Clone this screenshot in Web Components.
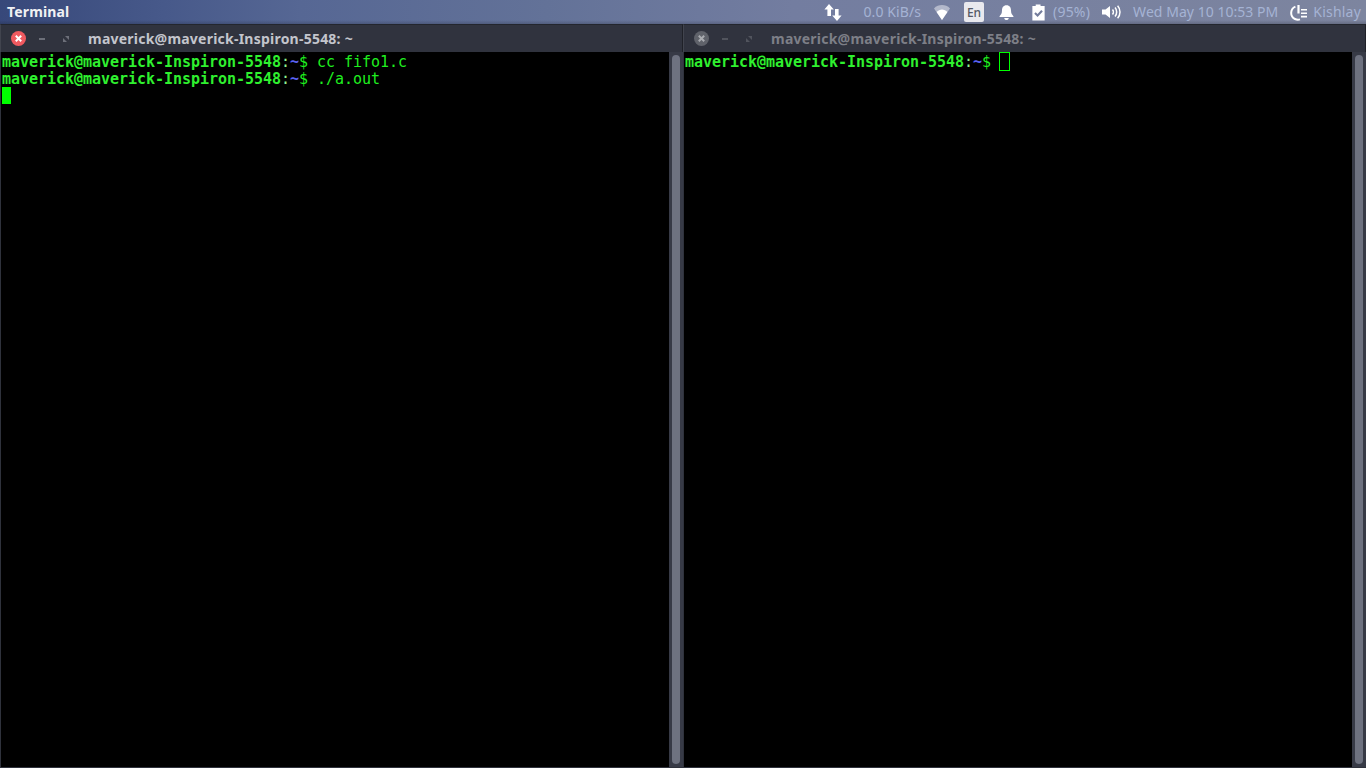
<!DOCTYPE html>
<html>
<head>
<meta charset="utf-8">
<title>Terminal</title>
<style>
html, body { margin: 0; height: 100%; background: #000; overflow: hidden; }
body { display: flex; flex-direction: column; width: 1366px; height: 768px; }
</style>
</head>
<body>
<top-panel title-text="Terminal">
    <tray-icon w="18" style="margin-right:21px">
        <svg width="18" height="17" viewBox="0 0 18 17" fill="#fff"><path d="M5 0 L9.8 5.6 H7 V12 H3.4 V5.6 H.4Z"/><path d="M11 5 H14.6 V11.4 H17.6 L13 17 L8.2 11.4 H11Z"/></svg>
    </tray-icon>
    <tray-text style="margin-right:13px;letter-spacing:.1px">0.0 KiB/s</tray-text>
    <tray-icon w="16" style="margin-right:14px">
        <svg width="16" height="15" viewBox="0 0 16 15"><path d="M0 3.4 C4.4 -1 11.6 -1 16 3.4 L8 15Z" fill="#fff" opacity=".45"/><path d="M2.6 7 C5.6 3.6 10.4 3.6 13.4 7 L8 15Z" fill="#fff"/></svg>
    </tray-icon>
    <lang-badge style="margin-right:15px">En</lang-badge>
    <tray-icon w="15" style="margin-right:18px">
        <svg width="16" height="17" viewBox="0 0 16 17" fill="#fff"><path d="M8 .8 C11.4 .8 12.8 3.4 12.8 6.4 C12.8 9.6 14 11 15.4 12.4 V13.4 H.6 V12.4 C2 11 3.2 9.6 3.2 6.4 C3.2 3.4 4.6 .8 8 .8Z"/><path d="M5.6 14.4 H10.4 C10.2 15.8 9.2 16.6 8 16.6 C6.8 16.6 5.8 15.8 5.6 14.4Z"/></svg>
    </tray-icon>
    <tray-icon w="13" style="margin-right:8px">
        <svg width="13" height="17" viewBox="0 0 14 17"><path d="M4.4 0 H9.6 V1.6 H14 V17 H.8 V1.6 H4.4Z" fill="#fff" transform="translate(-.4 0)"/><path d="M3.2 9 L6 11.8 L10.8 6.6" fill="none" stroke="#737c9c" stroke-width="2.2"/></svg>
    </tray-icon>
    <tray-text style="margin-right:12px">(95%)</tray-text>
    <tray-icon w="20" style="margin-right:11px">
        <svg width="20" height="14" viewBox="0 0 20 14"><path d="M0 4.5 H3.5 L8 1 V13 L3.5 9.5 H0Z" fill="#fff"/><path d="M10.5 4.5 C11.7 5.8 11.7 8.2 10.5 9.5 M13 2.6 C15.2 5 15.2 9 13 11.4 M15.6 .8 C18.8 4.4 18.8 9.6 15.6 13.2" fill="none" stroke="#fff" stroke-width="1.5"/></svg>
    </tray-icon>
    <tray-text style="margin-right:12px;letter-spacing:.04px">Wed May 10 10:53 PM</tray-text>
    <tray-icon w="17" style="margin-right:6px">
        <svg width="17" height="17" viewBox="0 0 17 17"><path d="M5.4 2.6 A6.8 6.8 0 0 0 5 15 C6.6 15.8 8.4 15.9 10 15.4" fill="none" stroke="#fff" stroke-width="2"/><path d="M7.4 1 H9.6 V9.6 H7.4Z M11 5 H17 V6.6 H11Z M11 8.4 H17 V10 H11Z M11 11.8 H17 V13.4 H11Z" fill="#fff"/></svg>
    </tray-icon>
    <tray-text style="margin-right:5px">Kishlay</tray-text>
</top-panel>
<window-row>
    <term-window focused title-text="maverick@maverick-Inspiron-5548: ~">
        <term-line prompt="maverick@maverick-Inspiron-5548">cc fifo1.c</term-line>
        <term-line prompt="maverick@maverick-Inspiron-5548">./a.out</term-line>
        <term-cursor solid></term-cursor>
    </term-window>
    <term-window title-text="maverick@maverick-Inspiron-5548: ~">
        <term-line prompt="maverick@maverick-Inspiron-5548"><term-cursor></term-cursor></term-line>
    </term-window>
</window-row>

<script>
class TopPanel extends HTMLElement {
    constructor() {
        super();
        this.attachShadow({ mode: 'open' });
        this.shadowRoot.innerHTML = `
            <style>
                :host {
                    display: flex;
                    align-items: center;
                    justify-content: space-between;
                    flex: none;
                    height: 24px;
                    box-sizing: border-box;
                    padding-left: 7px;
                    background:
                        linear-gradient(180deg, transparent 84%, rgba(20, 22, 30, .22) 100%),
                        linear-gradient(90deg, #37487a 0%, #47598a 12%, #566794 22%, #637298 40%, #737da0 58%, #7d859f 100%);
                    font-family: "Noto Sans", "Open Sans", sans-serif;
                }
                .name { color: #f0f1f4; font-size: 14px; font-weight: 700; letter-spacing: .15px; padding-bottom: 2px; }
                .tray { display: flex; align-items: center; }
            </style>
            <div class="name"></div>
            <div class="tray"><slot></slot></div>
        `;
        this.shadowRoot.querySelector('.name').textContent = this.getAttribute('title-text');
    }
}

class TrayIcon extends HTMLElement {
    constructor() {
        super();
        this.attachShadow({ mode: 'open' });
        this.shadowRoot.innerHTML = `
            <style>
                :host { display: flex; align-items: center; justify-content: center; height: 24px; }
                ::slotted(svg) { display: block; }
            </style>
            <slot></slot>
        `;
        this.style.width = this.getAttribute('w') + 'px';
    }
}

class TrayText extends HTMLElement {
    constructor() {
        super();
        this.attachShadow({ mode: 'open' });
        this.shadowRoot.innerHTML = `
            <style>
                :host { display: block; color: #a5b3d4; font-size: 14px; letter-spacing: .2px; line-height: 24px; white-space: nowrap; }
            </style>
            <slot></slot>
        `;
    }
}

class LangBadge extends HTMLElement {
    constructor() {
        super();
        this.attachShadow({ mode: 'open' });
        this.shadowRoot.innerHTML = `
            <style>
                :host {
                    display: flex; align-items: center; justify-content: center;
                    width: 20px; height: 20px; border-radius: 2px;
                    background: #e9e9ee; color: #555a66; font-size: 12px; font-weight: 500;
                }
            </style>
            <slot></slot>
        `;
    }
}

class WindowRow extends HTMLElement {
    constructor() {
        super();
        this.attachShadow({ mode: 'open' });
        this.shadowRoot.innerHTML = `
            <style>
                :host { display: grid; grid-template-columns: 683px 683px; flex: 1; min-height: 0; }
            </style>
            <slot></slot>
        `;
    }
}

class TermWindow extends HTMLElement {
    constructor() {
        super();
        this.attachShadow({ mode: 'open' });
        this.shadowRoot.innerHTML = `
            <style>
                :host {
                    display: flex; flex-direction: column; min-height: 0;
                    --title-colour: #7d7f87;
                    --close-bg: #5f626a;
                    --close-x: #a9abb0;
                    --btn: #51545d;
                }
                :host([focused]) {
                    --title-colour: #c3c5cc;
                    --close-bg: #ef5a60;
                    --close-x: #fff;
                    --btn: #6c6f79;
                }
                .bar {
                    flex: none; display: flex; align-items: center; height: 28px;
                    box-sizing: border-box; padding-left: 10px;
                    background: #30333e;
                    border-top: 1px solid #23262e;
                    border-left: 1px solid #41444e;
                    border-right: 1px solid #1f2128;
                }
                .btn { display: block; flex: none; }
                .min { margin-left: 13px; }
                .max { margin-left: 18px; }
                .title {
                    margin-left: 19px; color: var(--title-colour);
                    font: 700 14px "Noto Sans", "Open Sans", sans-serif; letter-spacing: .23px; white-space: nowrap;
                }
                .body { flex: 1; display: flex; min-height: 0; border-left: 1px solid #2f323c; border-bottom: 1px solid #2f323c; background: #000; }
                .screen {
                    flex: 1; box-sizing: border-box; padding: 2px 0 0 1px; min-width: 0;
                    font-family: "DejaVu Sans Mono", monospace;
                    font-size: 15px; letter-spacing: -.03px; line-height: 17px;
                    color: #1fee1f; background: #000;
                }
                .rail { flex: none; width: 14px; box-sizing: border-box; padding: 3px; background: #373a46; display: flex; }
                .thumb { flex: 1; background: #6e7280; border-radius: 4px; }
            </style>
            <div class="bar">
                <svg class="btn" width="15" height="15" viewBox="0 0 15 15">
                    <circle cx="7.5" cy="7.5" r="7.5" fill="var(--close-bg)"/>
                    <path d="M4.8 4.8 L10.2 10.2 M10.2 4.8 L4.8 10.2" stroke="var(--close-x)" stroke-width="2"/>
                </svg>
                <svg class="btn min" width="6" height="2" viewBox="0 0 6 2"><rect width="6" height="2" fill="var(--btn)"/></svg>
                <svg class="btn max" width="6" height="6" viewBox="0 0 6 6"><path d="M2 0 H6 V4Z M0 2 L4 6 H0Z" fill="var(--btn)"/></svg>
                <div class="title"></div>
            </div>
            <div class="body">
                <div class="screen"><slot></slot></div>
                <div class="rail"><div class="thumb"></div></div>
            </div>
        `;
        this.shadowRoot.querySelector('.title').textContent = this.getAttribute('title-text');
    }
}

class TermLine extends HTMLElement {
    constructor() {
        super();
        this.attachShadow({ mode: 'open' });
        this.shadowRoot.innerHTML = `<style>
                :host { display: block; height: 17px; white-space: pre; }
                b { font-weight: 700; color: #2ff02f; }
                .colon { color: #8ff08f; }
                .tilde { color: #5a62f0; font-weight: 700; }
                .dollar { color: #1fee1f; }
            </style><b></b><span class="colon">:</span><span class="tilde">~</span><span class="dollar">$</span> <slot></slot>`;
        this.shadowRoot.querySelector('b').textContent = this.getAttribute('prompt');
    }
}

class TermCursor extends HTMLElement {
    constructor() {
        super();
        this.attachShadow({ mode: 'open' });
        this.shadowRoot.innerHTML = `
            <style>
                :host {
                    display: inline-block; vertical-align: top;
                    width: 11px; height: 19px; box-sizing: border-box;
                    border: 1px solid #00ff00;
                    margin: -2px 0 0 -1px;
                }
                :host([solid]) { display: block; width: 9px; height: 17px; border: 0; background: #00ff00; margin: -1px 0 0 0; }
            </style>
        `;
    }
}

customElements.define('top-panel', TopPanel);
customElements.define('tray-icon', TrayIcon);
customElements.define('tray-text', TrayText);
customElements.define('lang-badge', LangBadge);
customElements.define('window-row', WindowRow);
customElements.define('term-window', TermWindow);
customElements.define('term-line', TermLine);
customElements.define('term-cursor', TermCursor);
</script>
</body>
</html>
